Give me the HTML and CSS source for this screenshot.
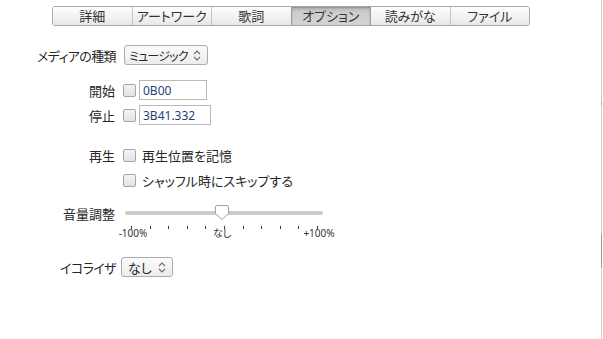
FILE: index.html
```html
<!DOCTYPE html>
<html lang="ja">
<head>
  <meta charset="UTF-8" />
  <meta name="viewport" content="width=device-width, initial-scale=1.0" />
  <title>オプション</title>
  <link rel="stylesheet" href="styles.css">
</head>
<body>
  <div class="window">
    <nav class="tabs">
      <button class="tab">詳細</button>
      <button class="tab">アートワーク</button>
      <button class="tab">歌詞</button>
      <button class="tab active">オプション</button>
      <button class="tab">読みがな</button>
      <button class="tab">ファイル</button>
    </nav>

    <form class="options">
      <div class="row row-media">
        <span class="label narrow">メディアの種類</span>
        <div class="select select-media">
          <span>ミュージック</span>
          <svg class="chev" width="8" height="11" viewBox="0 0 8 11"><path d="M1 4 L4 1 L7 4 M1 7 L4 10 L7 7" fill="none" stroke="#6b6b6b" stroke-width="1.1"/></svg>
        </div>
      </div>

      <div class="row row-start">
        <span class="label">開始</span>
        <span class="check"></span>
        <input class="time" type="text" value="0B00">
      </div>
      <div class="row row-stop">
        <span class="label">停止</span>
        <span class="check"></span>
        <input class="time time-wide" type="text" value="3B41.332">
      </div>

      <div class="row row-play">
        <span class="label">再生</span>
        <span class="check"></span>
        <span class="text">再生位置を記憶</span>
      </div>
      <div class="row row-shuffle">
        <span class="label"></span>
        <span class="check"></span>
        <span class="text">シャッフル時にスキップする</span>
      </div>

      <div class="row row-volume">
        <span class="label">音量調整</span>
        <div class="slider">
          <div class="track"></div>
          <svg class="thumb" width="16" height="17" viewBox="0 0 16 17"><path d="M3 1.5 H13 Q14.5 1.5 14.5 3 V9.5 L8 15.5 L1.5 9.5 V3 Q1.5 1.5 3 1.5 Z" fill="#fff" stroke="#a3a3a3" stroke-width="1"/></svg>
        </div>
      </div>
      <div class="scale">
        <div class="ticks">
          <i></i><i></i><i></i><i></i><i></i><i></i><i></i><i></i><i></i><i></i><i></i>
        </div>
        <div class="scale-labels">
          <span>-100%</span>
          <span class="mid">なし</span>
          <span class="end">+100%</span>
        </div>
      </div>

      <div class="row row-eq">
        <span class="label narrow">イコライザ</span>
        <div class="select select-eq">
          <span>なし</span>
          <svg class="chev" width="8" height="11" viewBox="0 0 8 11"><path d="M1 4 L4 1 L7 4 M1 7 L4 10 L7 7" fill="none" stroke="#6b6b6b" stroke-width="1.1"/></svg>
        </div>
      </div>
    </form>
  </div>
</body>
</html>
```

FILE: styles.css
```css
body {
  margin: 0;
  padding: 0;
  background: #fff;
  font-family: "Noto Sans", "Noto Sans CJK JP", sans-serif;
  font-feature-settings: "palt";
  color: #262626;
}
.window {
  position: relative;
  width: 602px;
  height: 339px;
  padding-top: 6px;
  box-sizing: border-box;
  border-right: 1px solid #d0d0d0;
}
.window::before {
  content: "";
  position: absolute;
  right: -1px;
  top: 102px;
  width: 1px;
  height: 3px;
  background: #a8a8a8;
}
.window::after {
  content: "";
  position: absolute;
  right: -1px;
  top: 234px;
  width: 1px;
  height: 34px;
  background: #9c9c9c;
}
.tabs {
  display: flex;
  width: 478px;
  height: 20px;
  margin-left: 52px;
  border: 1px solid #a9a9a9;
  border-radius: 3px;
  overflow: hidden;
  box-sizing: border-box;
}
.tab {
  flex: 1;
  border: none;
  border-left: 1px solid #c3c3c3;
  padding: 0;
  background: linear-gradient(#fefefe, #f3f3f3 50%, #e7e7e7);
  font-family: "Noto Sans CJK JP", sans-serif;
  font-feature-settings: "palt";
  font-size: 13px;
  line-height: 18px;
  color: #333;
}
.tab:first-child {
  border-left: none;
}
.tab.active {
  background: linear-gradient(#b8b8b8, #cecece 35%, #d4d4d4);
  box-shadow: inset 0 1px 2px rgba(0, 0, 0, 0.25);
  border-left-color: #9d9d9d;
}
.tab.active + .tab {
  border-left-color: #9d9d9d;
}
.row {
  display: flex;
  align-items: center;
  height: 20px;
  font-family: "Noto Sans CJK JP", sans-serif;
  font-size: 13px;
}
.label {
  width: 115px;
  margin-right: 8px;
  text-align: right;
  flex: none;
}
.label.narrow {
  letter-spacing: -0.6px;
  width: 116px;
  margin-right: 7px;
}
.row-media {
  margin-top: 19px;
}
.row-start {
  margin-top: 15px;
}
.row-stop {
  margin-top: 5px;
}
.row-play {
  margin-top: 20px;
}
.row-shuffle {
  margin-top: 5px;
}
.row-volume {
  margin-top: 13px;
}
.row-eq {
  margin-top: 18px;
}
.select {
  display: flex;
  align-items: center;
  justify-content: space-between;
  box-sizing: border-box;
  height: 20px;
  padding: 0 6px 0 6px;
  border: 1px solid #ababab;
  border-radius: 3px;
  background: linear-gradient(#fbfbfb, #ececec);
  font-size: 13px;
  white-space: nowrap;
}
.select-media {
  width: 84px;
  margin-left: 1px;
  padding-left: 4px;
  font-size: 12px;
  letter-spacing: -0.8px;
}
.select-eq {
  width: 52px;
  margin-left: -2px;
}
.check {
  display: inline-block;
  width: 11px;
  height: 11px;
  margin: 0 3px 0 0;
  border: 1px solid #a6a6a6;
  border-radius: 2px;
  background: linear-gradient(#f4f4f4, #e2e2e2);
  flex: none;
}
.text {
  margin-left: 3px;
}
.time {
  box-sizing: border-box;
  width: 68px;
  height: 20px;
  margin: 0;
  padding: 0 0 0 3px;
  border: 1px solid #b9b9b9;
  font-family: "Noto Sans", sans-serif;
  font-size: 12px;
  color: #1f3f7a;
  outline: none;
}
.time-wide {
  width: 72px;
}
.slider {
  position: relative;
  width: 202px;
  height: 20px;
}
.track {
  margin: 8px 2px 0;
  height: 4px;
  border-radius: 2px;
  background: #cbcbcb;
}
.thumb {
  position: absolute;
  left: 91px;
  top: 1px;
}
.scale {
  margin-left: 123px;
  width: 230px;
}
.ticks {
  display: flex;
  justify-content: space-between;
  width: 187px;
  margin: 3px 0 0 8px;
}
.ticks i {
  width: 1px;
  height: 3px;
  background: #3a3a3a;
}
.scale-labels {
  display: flex;
  margin: -2px 0 0 -10px;
  font-family: "Noto Sans", "Noto Sans CJK JP", sans-serif;
  font-size: 10px;
  line-height: 12px;
  color: #333;
}
.scale-labels span {
  width: 40px;
  text-align: center;
}
.scale-labels .mid {
  margin-left: 49px;
}
.scale-labels .end {
  margin-left: 57px;
}
```
